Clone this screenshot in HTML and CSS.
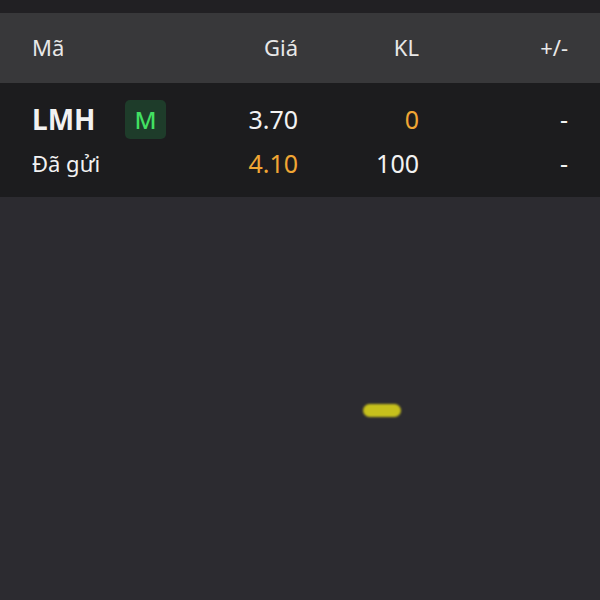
FILE: index.html
```html
<!DOCTYPE html>
<html lang="vi">
<head>
<meta charset="utf-8">
<title>Lệnh</title>
<link rel="stylesheet" href="styles.css">
</head>
<body>
<div class="screen">
  <div class="topbar"></div>
  <div class="table">
    <div class="row head">
      <div class="cell name">Mã</div>
      <div class="cell num">Giá</div>
      <div class="cell num">KL</div>
      <div class="cell num">+/-</div>
    </div>
    <div class="body">
      <div class="row r1">
        <div class="cell name"><span class="sym">LMH</span><span class="badge">M</span></div>
        <div class="cell num">3.70</div>
        <div class="cell num orange">0</div>
        <div class="cell num">-</div>
      </div>
      <div class="row r2">
        <div class="cell name status">Đã gửi</div>
        <div class="cell num orange">4.10</div>
        <div class="cell num">100</div>
        <div class="cell num">-</div>
      </div>
    </div>
  </div>
  <div class="empty">
    <span class="dot"></span>
  </div>
</div>
</body>
</html>
```
FILE: styles.css
```css
html, body {
  margin: 0;
  padding: 0;
  background: #2c2b30;
}
.screen {
  width: 600px;
  height: 600px;
  display: flex;
  flex-direction: column;
  font-family: "Noto Sans", "Open Sans", sans-serif;
  color: #f2f2f2;
  overflow: hidden;
}
.topbar {
  height: 13px;
  background: #212023;
}
.row {
  display: grid;
  grid-template-columns: 168px 98px 121px 149px;
  padding: 0 32px;
  align-items: center;
}
.head {
  height: 70px;
  background: #38383a;
  font-size: 22px;
  color: #e8e8e8;
}
.head .cell {
  padding-bottom: 2px;
}
.body {
  background: #1c1c1e;
  padding: 16px 0 10px;
}
.r1 {
  height: 40px;
  font-size: 25px;
}
.r2 {
  height: 48px;
  font-size: 25px;
}
.cell.num {
  text-align: right;
}
.cell.name {
  display: flex;
  align-items: center;
  gap: 32px;
}
.sym {
  font-size: 28px;
  font-weight: 700;
  width: 61px;
  white-space: nowrap;
}
.badge {
  width: 41px;
  height: 39px;
  border-radius: 5px;
  background: #1e3c2a;
  color: #42e062;
  font-size: 24px;
  font-weight: 500;
  display: flex;
  align-items: center;
  justify-content: center;
}
.status {
  font-size: 22px;
}
.orange {
  color: #f0a634;
}
.empty {
  flex: 1;
  position: relative;
}
.dot {
  position: absolute;
  left: 363px;
  top: 207px;
  width: 38px;
  height: 13px;
  border-radius: 7px;
  background: #c6c01c;
  filter: blur(0.8px);
}
```
